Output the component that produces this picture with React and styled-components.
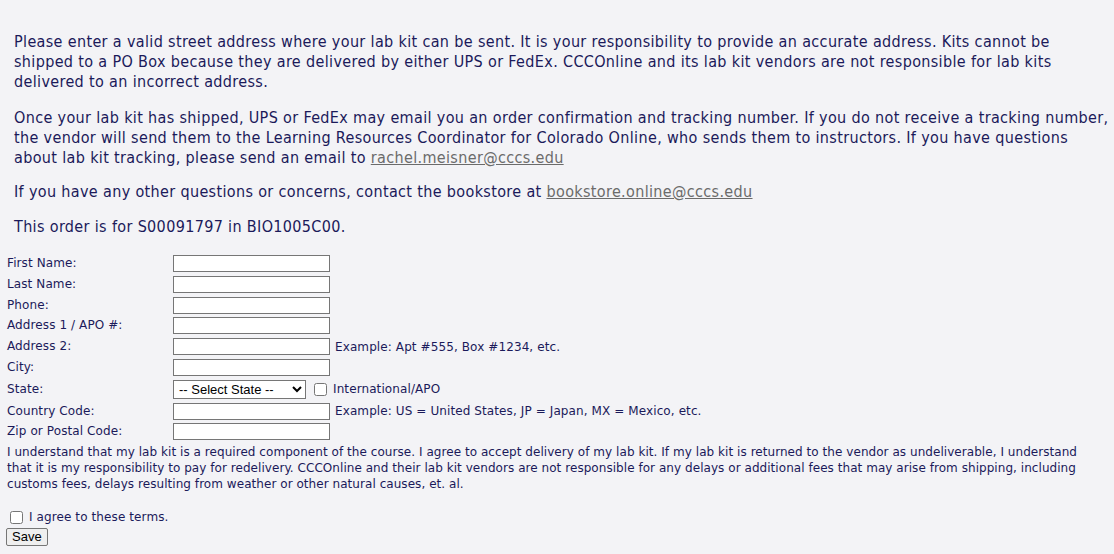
import React from "react";
import styled, { createGlobalStyle } from "styled-components";

const GlobalStyle = createGlobalStyle`
  html, body {
    margin: 0;
    padding: 0;
    background: #f3f3f6;
  }
  body {
    font-family: "DejaVu Sans Condensed", "DejaVu Sans", sans-serif;
    color: #1b1a5a;
  }
`;

const Page = styled.div`
  width: 1114px;
  height: 554px;
  overflow: hidden;
  padding-top: 32px;
  box-sizing: border-box;
`;

const Intro = styled.div`
  padding: 0 0 0 14px;
`;

const Para = styled.p`
  margin: 0 0 ${(p) => p.$after || 15}px;
  font-size: 16px;
  line-height: 20px;
  letter-spacing: 0.35px;
  white-space: nowrap;
`;

const Mail = styled.a`
  color: #6b6b6b;
  text-decoration: underline;
`;

const Form = styled.form`
  padding: 3px 0 0 7px;
  font-family: "DejaVu Sans", sans-serif;
  font-size: 12px;
  letter-spacing: 0.1px;
`;

const Grid = styled.div`
  display: grid;
  grid-template-columns: 166px auto;
  row-gap: 3.8px;
  align-items: center;
`;

const Label = styled.label`
  line-height: 15px;
`;

const Field = styled.div`
  display: flex;
  align-items: center;
  gap: 5px;
`;

const TextInput = styled.input`
  box-sizing: border-box;
  width: 157px;
  height: 17px;
  margin: 0;
  border: 1px solid #767676;
  background: #fff;
  padding: 1px 2px;
  font-size: 12px;
`;

const Select = styled.select`
  box-sizing: border-box;
  width: 133px;
  height: 19px;
  margin: 0;
  border: 1px solid #767676;
  border-radius: 0;
  background: #fff;
  color: #000;
  font-family: "Liberation Sans", Arial, sans-serif;
  font-size: 13px;
  letter-spacing: 0;
  padding: 0 0 0 1px;
`;

const Check = styled.input.attrs({ type: "checkbox" })`
  width: 13px;
  height: 13px;
  margin: ${(p) => p.$margin || "0 6px 0 3px"};
`;

const Hint = styled.span`
  white-space: nowrap;
`;

const Terms = styled.p`
  margin: 4px 0 16px;
  line-height: 16px;
  letter-spacing: 0.05px;
  white-space: nowrap;
`;

const AgreeRow = styled.div`
  display: flex;
  align-items: center;
  height: 18px;
`;

const SaveButton = styled.button`
  margin: 2px 0 0 -1px;
  height: 18px;
  padding: 0 5px;
  font-family: "Liberation Sans", Arial, sans-serif;
  font-size: 13px;
  letter-spacing: 0;
  line-height: 14px;
  color: #000;
  background: #efefef;
  border: 1px solid #767676;
  border-radius: 2px;
`;

const fields = [
  { label: "First Name:" },
  { label: "Last Name:" },
  { label: "Phone:" },
  { label: "Address 1 / APO #:" },
  { label: "Address 2:", hint: "Example: Apt #555, Box #1234, etc." },
  { label: "City:" },
  { label: "State:", select: true },
  {
    label: "Country Code:",
    hint: "Example: US = United States, JP = Japan, MX = Mexico, etc.",
  },
  { label: "Zip or Postal Code:" },
];

export default function App() {
  return (
    <Page>
      <GlobalStyle />
      <Intro>
        <Para $after={16}>
          Please enter a valid street address where your lab kit can be sent. It is your responsibility to provide an accurate address. Kits cannot be
          <br />
          shipped to a PO Box because they are delivered by either UPS or FedEx. CCCOnline and its lab kit vendors are not responsible for lab kits
          <br />
          delivered to an incorrect address.
        </Para>
        <Para $after={14}>
          Once your lab kit has shipped, UPS or FedEx may email you an order confirmation and tracking number. If you do not receive a tracking number,
          <br />
          the vendor will send them to the Learning Resources Coordinator for Colorado Online, who sends them to instructors. If you have questions
          <br />
          about lab kit tracking, please send an email to{" "}
          <Mail href="#">rachel.meisner@cccs.edu</Mail>
        </Para>
        <Para $after={15}>
          If you have any other questions or concerns, contact the bookstore at{" "}
          <Mail href="#">bookstore.online@cccs.edu</Mail>
        </Para>
        <Para>This order is for S00091797 in BIO1005C00.</Para>
      </Intro>
      <Form onSubmit={(e) => e.preventDefault()}>
        <Grid>
          {fields.map((f) => (
            <React.Fragment key={f.label}>
              <Label>{f.label}</Label>
              <Field>
                {f.select ? (
                  <>
                    <Select defaultValue="">
                      <option value="">-- Select State --</option>
                    </Select>
                    <Check $margin="0 1px 0 3px" />
                    <Hint>International/APO</Hint>
                  </>
                ) : (
                  <TextInput type="text" />
                )}
                {f.hint && <Hint>{f.hint}</Hint>}
              </Field>
            </React.Fragment>
          ))}
        </Grid>
        <Terms>
          I understand that my lab kit is a required component of the course. I agree to accept delivery of my lab kit. If my lab kit is returned to the vendor as undeliverable, I understand
          <br />
          that it is my responsibility to pay for redelivery. CCCOnline and their lab kit vendors are not responsible for any delays or additional fees that may arise from shipping, including
          <br />
          customs fees, delays resulting from weather or other natural causes, et. al.
        </Terms>
        <AgreeRow>
          <Check />
          I agree to these terms.
        </AgreeRow>
        <SaveButton type="submit">Save</SaveButton>
      </Form>
    </Page>
  );
}
